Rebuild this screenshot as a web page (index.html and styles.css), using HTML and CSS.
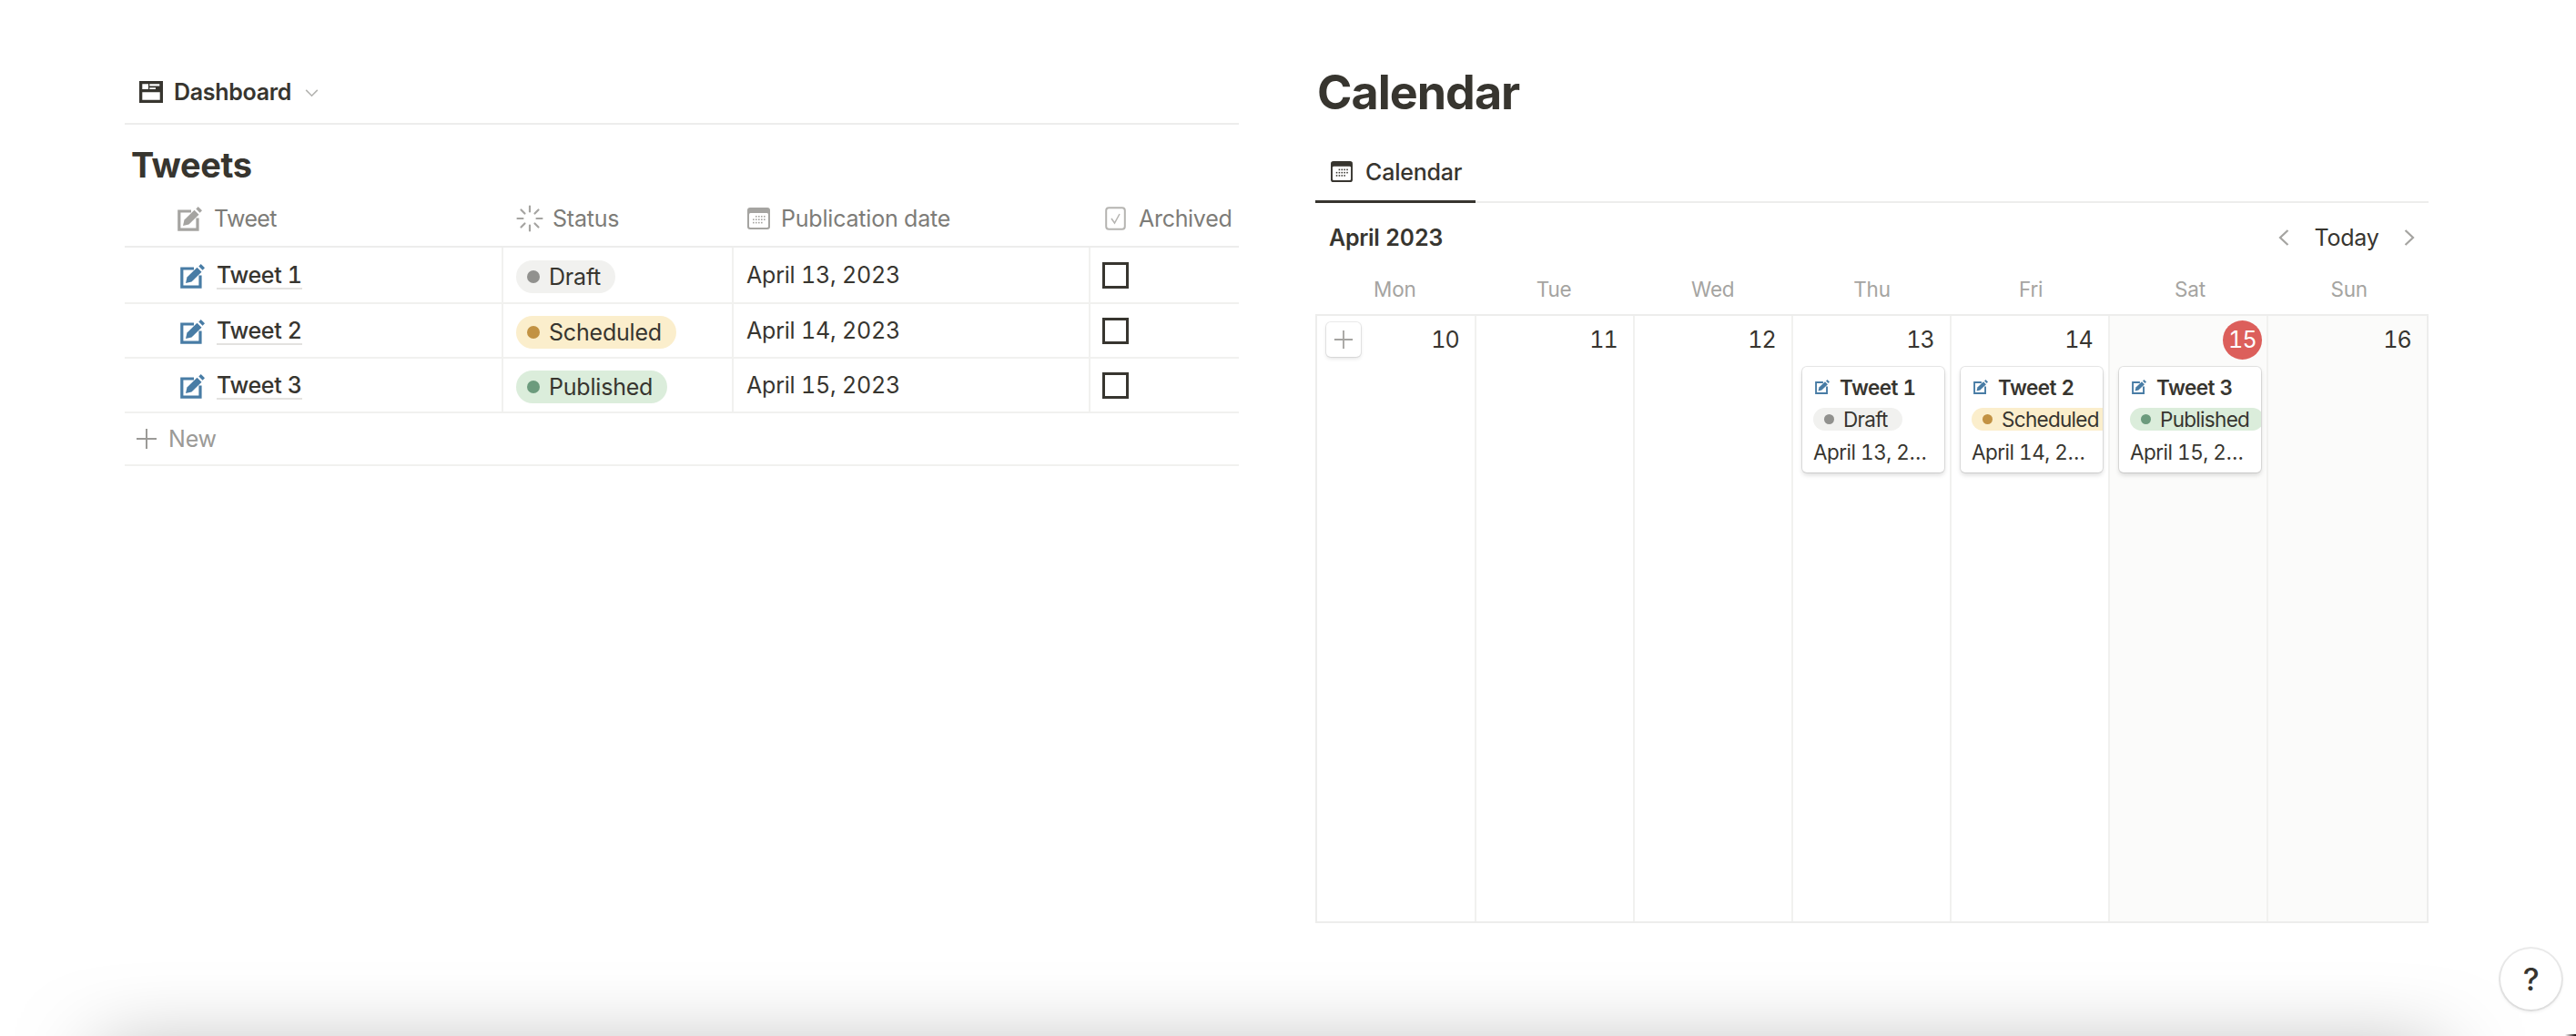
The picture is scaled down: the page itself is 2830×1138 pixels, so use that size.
FILE: index.html
```html
<!DOCTYPE html>
<html lang="en">
<head>
<meta charset="utf-8">
<title>Dashboard</title>
<link rel="stylesheet" href="styles.css">
</head>
<body>
<svg class="defs" width="0" height="0" aria-hidden="true">
  <symbol id="edit" viewBox="0 0 27 27">
    <path d="M15 5H1.8v20.2H22V12.5" fill="none" stroke="currentColor" stroke-width="3.2"/>
    <path d="M6 21l1.500-6.500L18.500 3.800l5 5L12.500 19.500z" fill="currentColor"/>
    <path d="M20.300 2.400l2.400-2.400 4.300 4.300-2.400 2.400z" fill="currentColor"/>
  </symbol>
  <symbol id="cal" viewBox="0 0 25 24">
    <rect width="25" height="24" rx="3" fill="currentColor"/>
    <rect x="2" y="6" width="21" height="16" rx="1.5" fill="#fff"/>
    <g fill="currentColor">
      <rect x="9" y="9" width="1.6" height="1.6"/><rect x="12" y="9" width="1.6" height="1.6"/><rect x="15" y="9" width="1.6" height="1.6"/><rect x="18" y="9" width="1.6" height="1.6"/>
      <rect x="6" y="12.4" width="1.6" height="1.6"/><rect x="9" y="12.4" width="1.6" height="1.6"/><rect x="12" y="12.4" width="1.6" height="1.6"/><rect x="15" y="12.4" width="1.6" height="1.6"/><rect x="18" y="12.4" width="1.6" height="1.6"/>
      <rect x="6" y="15.8" width="1.6" height="1.6"/><rect x="9" y="15.8" width="1.6" height="1.6"/><rect x="12" y="15.8" width="1.6" height="1.6"/><rect x="15" y="15.8" width="1.6" height="1.6"/>
    </g>
  </symbol>
  <symbol id="plus" viewBox="0 0 24 24">
    <path d="M12 1v22M1 12h22" fill="none" stroke="currentColor" stroke-width="2"/>
  </symbol>
  <symbol id="left" viewBox="0 0 12 18">
    <path d="M10.5 1L2 9l8.500 8" fill="none" stroke="currentColor" stroke-width="2.200"/>
  </symbol>
  <symbol id="right" viewBox="0 0 12 18">
    <path d="M1.500 1L10 9l-8.500 8" fill="none" stroke="currentColor" stroke-width="2.200"/>
  </symbol>
</svg>

<div class="page">
  <section class="left">
    <div class="crumb">
      <svg class="ic-dash" viewBox="0 0 26 24">
        <path fill-rule="evenodd" fill="#37352f" d="M0 0h26v24H0zM3.300 3.300v5.700H10V3.300zM11.300 3.300v2.300h11V3.300zM11.300 7.300v1.700H18V7.300zM3.300 12.300v8.400h19.400v-8.400z"/>
      </svg>
      <span class="crumb-name">Dashboard</span>
      <svg class="ic-chev" viewBox="0 0 16 10"><path d="M1 1l7 7 7-7" fill="none" stroke="currentColor" stroke-width="1.800"/></svg>
    </div>
    <h2 class="db-title">Tweets</h2>
    <div class="thead">
      <div class="th th-name"><svg class="ic-edit-h"><use href="#edit"/></svg>Tweet</div>
      <div class="th th-status">
        <svg class="ic-spin" viewBox="0 0 30 30"><g fill="none" stroke="currentColor" stroke-width="2.200" stroke-linecap="round"><path d="M15 1.500v6M15 22.500v6M1.500 15h6M22.500 15h6M5.500 5.500l4 4M20.500 20.500l4 4M5.500 24.500l4-4M20.500 9.500l4-4"/></g></svg>Status
      </div>
      <div class="th th-date"><svg class="ic-cal-h"><use href="#cal"/></svg>Publication date</div>
      <div class="th th-arch">
        <svg class="ic-check" viewBox="0 0 23 26"><rect x="1.200" y="1.200" width="20.600" height="23.600" rx="3" fill="none" stroke="currentColor" stroke-width="2"/><path d="M7 13l3.500 5L16 8" fill="none" stroke="currentColor" stroke-width="1.500"/></svg>Archived
      </div>
    </div>
    <div class="tr">
      <div class="td td-name"><svg class="ic-edit"><use href="#edit"/></svg><span class="link">Tweet 1</span></div>
      <div class="td"><span class="pill pill-draft"><i class="dot"></i>Draft</span></div>
      <div class="td">April 13, 2023</div>
      <div class="td"><span class="box"></span></div>
    </div>
    <div class="tr">
      <div class="td td-name"><svg class="ic-edit"><use href="#edit"/></svg><span class="link">Tweet 2</span></div>
      <div class="td"><span class="pill pill-sched"><i class="dot"></i>Scheduled</span></div>
      <div class="td">April 14, 2023</div>
      <div class="td"><span class="box"></span></div>
    </div>
    <div class="tr">
      <div class="td td-name"><svg class="ic-edit"><use href="#edit"/></svg><span class="link">Tweet 3</span></div>
      <div class="td"><span class="pill pill-pub"><i class="dot"></i>Published</span></div>
      <div class="td">April 15, 2023</div>
      <div class="td"><span class="box"></span></div>
    </div>
    <div class="add-row"><svg class="ic-plus"><use href="#plus"/></svg>New</div>
  </section>

  <section class="right">
    <h1 class="cal-title">Calendar</h1>
    <div class="tabs">
      <div class="tab"><svg class="ic-cal-tab"><use href="#cal"/></svg>Calendar</div>
    </div>
    <div class="toolbar">
      <span class="month">April 2023</span>
      <div class="nav">
        <svg class="ic-nav"><use href="#left"/></svg>
        <span class="today-btn">Today</span>
        <svg class="ic-nav"><use href="#right"/></svg>
      </div>
    </div>
    <div class="weekdays">
      <span>Mon</span><span>Tue</span><span>Wed</span><span>Thu</span><span>Fri</span><span>Sat</span><span>Sun</span>
    </div>
    <div class="grid">
      <div class="cell">
        <div class="cell-head"><span class="add-btn"><svg class="ic-add"><use href="#plus"/></svg></span><span class="num">10</span></div>
      </div>
      <div class="cell"><div class="cell-head"><span class="num">11</span></div></div>
      <div class="cell"><div class="cell-head"><span class="num">12</span></div></div>
      <div class="cell">
        <div class="cell-head"><span class="num">13</span></div>
        <div class="card">
          <div class="card-title"><svg class="ic-edit-s"><use href="#edit"/></svg>Tweet 1</div>
          <span class="pill-s pill-draft"><i class="dot-s"></i>Draft</span>
          <div class="card-date">April 13, 2023</div>
        </div>
      </div>
      <div class="cell">
        <div class="cell-head"><span class="num">14</span></div>
        <div class="card">
          <div class="card-title"><svg class="ic-edit-s"><use href="#edit"/></svg>Tweet 2</div>
          <span class="pill-s pill-sched"><i class="dot-s"></i>Scheduled</span>
          <div class="card-date">April 14, 2023</div>
        </div>
      </div>
      <div class="cell weekend">
        <div class="cell-head"><span class="num num-today">15</span></div>
        <div class="card">
          <div class="card-title"><svg class="ic-edit-s"><use href="#edit"/></svg>Tweet 3</div>
          <span class="pill-s pill-pub"><i class="dot-s"></i>Published</span>
          <div class="card-date">April 15, 2023</div>
        </div>
      </div>
      <div class="cell weekend"><div class="cell-head"><span class="num">16</span></div></div>
    </div>
  </section>
</div>

<div class="edge-shadow"></div>
<div class="help">?</div>
<div class="corner"></div>
</body>
</html>
```

FILE: styles.css
```css
* { box-sizing: border-box; }
html, body { margin: 0; height: 100%; }
body {
  position: relative;
  overflow: hidden;
  background: #fff;
  color: #37352f;
  font-family: Inter, "Liberation Sans", sans-serif;
  font-size: 25px;
  letter-spacing: -0.2px;
  font-variant-numeric: tabular-nums;
}
.defs { position: absolute; }
svg { display: block; flex: none; }

.page {
  display: flex;
  gap: 84px;
  padding-left: 137px;
}

/* left: table */
.left { width: 1224px; }
.crumb {
  display: flex;
  align-items: center;
  height: 137px;
  padding: 74px 0 7px 16px;
  border-bottom: 2px solid #ededec;
}
.ic-dash { width: 26px; height: 24px; margin-right: 12px; }
.crumb-name { font-weight: 600; font-size: 25px; letter-spacing: -0.3px; }
.ic-chev { width: 15px; height: 9px; margin: 3px 0 0 15px; color: #b4b4b1; }
.db-title {
  margin: 0;
  height: 71px;
  padding: 20px 0 0 7px;
  font-size: 38px;
  line-height: 48px;
  font-weight: 700;
  letter-spacing: -0.4px;
}
.thead, .tr {
  display: grid;
  grid-template-columns: 414px 253px 392px 165px;
}
.thead {
  height: 64px;
  padding-top: 2px;
  border-bottom: 2px solid #ededec;
  color: #7d7c78;
}
.th { display: flex; align-items: center; }
.th-name { padding-left: 58px; letter-spacing: -0.6px; }
.th-status { padding-left: 16px; }
.th-date { padding-left: 17px; }
.th-arch { padding-left: 18px; letter-spacing: -0.3px; }
.ic-edit-h { width: 27px; height: 27px; margin-right: 13px; color: #a5a4a1; }
.ic-spin { width: 30px; height: 30px; margin-right: 10px; color: #a5a4a1; }
.ic-cal-h { width: 25px; height: 24px; margin-right: 12px; color: #a5a4a1; }
.ic-check { width: 23px; height: 26px; margin-right: 14px; color: #b5b4b1; }

.tr { height: 60px; border-bottom: 2px solid #f1f1ef; }
.thead + .tr { height: 62px; }
.td {
  display: flex;
  align-items: center;
  padding-left: 14px;
  border-left: 2px solid #f1f1ef;
}
.td-name { padding-left: 61px; padding-top: 2px; border-left: 0; }
.ic-edit { width: 27px; height: 27px; margin-right: 13px; color: #487ca5; }
.link {
  font-weight: 500;
  line-height: 28px;
  letter-spacing: -0.3px;
  border-bottom: 2px solid #e3e2e0;
}
.pill {
  display: inline-flex;
  align-items: center;
  height: 36px;
  margin-top: 4px;
  padding: 0 16px 0 12px;
  border-radius: 18px;
}
.dot {
  width: 14px;
  height: 14px;
  margin-right: 10px;
  border-radius: 50%;
  background: currentColor;
}
.pill-draft { background: #f1f1ef; }
.pill-sched { background: #fbeecc; }
.pill-pub { background: #dbeddb; }
.pill-draft .dot, .pill-draft .dot-s { color: #91918e; }
.pill-sched .dot, .pill-sched .dot-s { color: #c29243; }
.pill-pub .dot, .pill-pub .dot-s { color: #6c9b7d; }
.box {
  display: block;
  width: 29px;
  height: 29px;
  border: 3px solid #37352f;
}
.td:last-child { padding-left: 13px; }
.add-row {
  display: flex;
  align-items: center;
  height: 58px;
  padding-left: 12px;
  color: #9b9a97;
  border-bottom: 2px solid #f1f1ef;
}
.ic-plus { width: 24px; height: 24px; margin-right: 12px; }

/* right: calendar */
.right { width: 1223px; padding-top: 67px; }
.cal-title {
  margin: 0;
  height: 70px;
  padding-left: 2px;
  font-size: 52px;
  line-height: 70px;
  font-weight: 700;
  letter-spacing: -1px;
}
.tabs {
  height: 70px;
  margin-top: 16px;
  border-bottom: 2px solid #ededec;
}
.tab {
  display: flex;
  align-items: center;
  width: 176px;
  height: 70px;
  padding: 4px 0 0 17px;
  border-bottom: 3px solid #37352f;
  font-weight: 500;
}
.ic-cal-tab { width: 24px; height: 23px; margin-right: 14px; }
.toolbar {
  display: flex;
  align-items: center;
  justify-content: space-between;
  height: 76px;
  padding: 0 15px 0 15px;
}
.month { font-weight: 600; letter-spacing: -0.3px; }
.nav { display: flex; align-items: center; }
.ic-nav { width: 12px; height: 18px; color: #a5a4a1; }
.today-btn { width: 126px; text-align: center; }
.weekdays {
  display: grid;
  grid-template-columns: repeat(7, 1fr);
  height: 46px;
  line-height: 38px;
  color: #a5a4a1;
  font-size: 22.500px;
  text-align: center;
}
.grid {
  display: grid;
  grid-template-columns: repeat(7, 1fr);
  height: 669px;
  padding-left: 1px;
  border: 2px solid #ededec;
}
.cell { min-width: 0; border-right: 2px solid #f1f1ef; }
.cell:last-child { border-right: 0; }
.weekend { background: #fbfbfa; }
.cell-head {
  display: flex;
  align-items: center;
  justify-content: space-between;
  height: 56px;
  padding: 0 17px 4px 0;
}
.num { margin-left: auto; letter-spacing: -0.8px; }
.num-today {
  display: flex;
  align-items: center;
  justify-content: center;
  width: 43px;
  height: 43px;
  margin-right: -12px;
  border-radius: 50%;
  background: #dc5f5b;
  color: #fff;
}
.add-btn {
  display: flex;
  align-items: center;
  justify-content: center;
  width: 38px;
  height: 38px;
  margin-left: 9px;
  border-radius: 5px;
  background: #fff;
  color: #a5a4a1;
  box-shadow: 0 0 0 1px rgba(15, 15, 15, .08), 0 2px 4px rgba(15, 15, 15, .12);
}
.ic-add { width: 22px; height: 22px; }
.card {
  height: 116px;
  margin: 0 6px 0 10px;
  padding: 9px 3px 0 12px;
  overflow: hidden;
  background: #fff;
  border-radius: 5px;
  box-shadow: 0 0 0 1px rgba(15, 15, 15, .1), 0 3px 5px rgba(15, 15, 15, .14);
  font-size: 22.500px;
}
.card-title {
  display: flex;
  align-items: center;
  height: 26px;
  margin-left: 2px;
  font-weight: 600;
  letter-spacing: -0.5px;
  white-space: nowrap;
}
.ic-edit-s { width: 16px; height: 16px; margin-right: 11px; color: #487ca5; }
.pill-s {
  display: inline-flex;
  align-items: center;
  height: 25px;
  margin-top: 10px;
  padding: 0 16px 0 12px;
  border-radius: 13px;
  letter-spacing: -0.7px;
  white-space: nowrap;
}
.dot-s {
  width: 11px;
  height: 11px;
  margin-right: 10px;
  border-radius: 50%;
  background: currentColor;
}
.card-date {
  margin-top: 9px;
  padding-right: 6px;
  line-height: 30px;
  letter-spacing: -0.5px;
  white-space: nowrap;
  overflow: hidden;
  text-overflow: ellipsis;
}

/* overlays */
.edge-shadow {
  position: absolute;
  left: 0;
  right: 0;
  bottom: 0;
  height: 100px;
  overflow: hidden;
}
.edge-shadow::before {
  content: "";
  position: absolute;
  left: 110px;
  right: 150px;
  top: 127px;
  height: 40px;
  box-shadow: 0 0 90px rgba(0, 0, 0, .5);
}
.help {
  position: absolute;
  right: 16px;
  bottom: 29px;
  display: flex;
  align-items: center;
  justify-content: center;
  width: 67px;
  height: 67px;
  border-radius: 50%;
  background: #fff;
  font-size: 34px;
  font-weight: 500;
  box-shadow: 0 0 0 2px rgba(15, 15, 15, .08), 0 2px 4px rgba(15, 15, 15, .1);
}
.corner {
  position: absolute;
  right: 0;
  bottom: 0;
  width: 12px;
  height: 2px;
  background: linear-gradient(to right, transparent, #1a0a0a);
}
```
